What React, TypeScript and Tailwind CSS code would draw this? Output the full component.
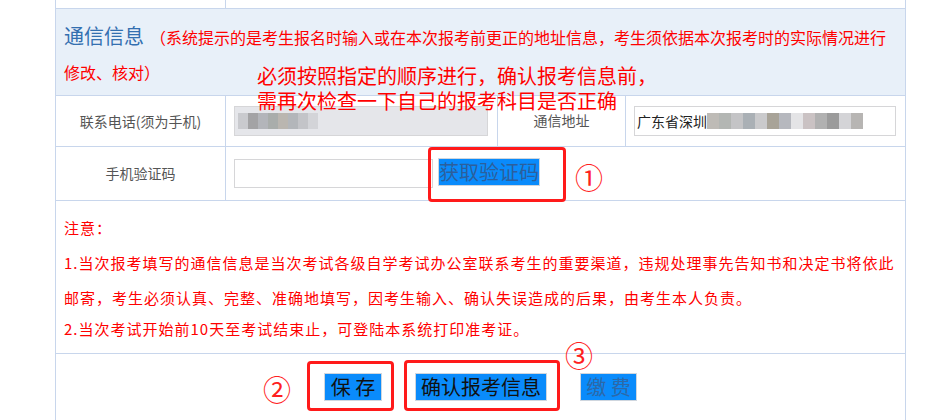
import React from "react";

const phoneBlur = ["#c9cace", "#a3a3a5", "#b3b5ba", "#a9adab", "#bab6b0", "#b3b6ba", "#c3c4c8", "#d3d4d8"];
const addrBlur = [
  "#bebbb6", "#b3b6b3", "#c4c4c6", "#aab0b5", "#cacacc", "#a8a398", "#b6b8be",
  "#e4e4e6", "#cac2c3", "#b1b1b1", "#9b9b9b", "#d4d4d7", "#b7b5b3",
];

const Mosaic = ({ colors, cell }: { colors: string[]; cell: string }) => (
  <div className="flex">
    {colors.map((c, i) => (
      <div key={i} className={cell} style={{ backgroundColor: c }} />
    ))}
  </div>
);

const App = () => {
  return (
    <div className="relative w-[947px] h-[420px] overflow-hidden bg-white font-['Noto_Sans_CJK_SC',sans-serif]">
      <div className="ml-[55px] w-[851px] h-full border-l border-r border-[#c8d6ec]">
        {/* previous row (cut off) */}
        <div className="grid grid-cols-[170px_1fr] h-[9px] border-b border-[#c8d6ec]">
          <div className="border-r border-[#c8d6ec]" />
          <div />
        </div>

        {/* header */}
        <div className="h-[87px] bg-[#e8f0f9] border-b border-[#c8d6ec] px-[8px] pt-[9px] leading-[35px]">
          <span className="text-[20px] text-[#336fb0]">通信信息</span>
          <span className="ml-[6px] text-[16px] text-[#ff0000]">
            （系统提示的是考生报名时输入或在本次报考前更正的地址信息，考生须依据本次报考时的实际情况进行修改、核对）
          </span>
        </div>

        {/* phone / address */}
        <div className="grid grid-cols-[170px_272px_128px_1fr] h-[51px] border-b border-[#c8d6ec] text-[14px] text-[#555]">
          <div className="flex items-center justify-center border-r border-[#c8d6ec]">联系电话(须为手机)</div>
          <div className="flex items-center pl-[8px] border-r border-[#c8d6ec]">
            <div className="flex items-center w-[254px] h-[30px] bg-[#e5e6ea] border border-[#d6d6d8] pl-[3px]">
              <Mosaic colors={phoneBlur} cell="w-[10px] h-[16px]" />
            </div>
          </div>
          <div className="flex items-center justify-center border-r border-[#c8d6ec] pb-[2px]">通信地址</div>
          <div className="flex items-center pl-[8px]">
            <div className="flex items-center w-[262px] h-[30px] bg-white border border-[#d6d6d8] pl-[2px] text-[#222]">
              <span>广东省深圳</span>
              <Mosaic colors={addrBlur} cell="w-[12px] h-[16px]" />
            </div>
          </div>
        </div>

        {/* verification code */}
        <div className="grid grid-cols-[170px_1fr] h-[54px] border-b border-[#c8d6ec]">
          <div className="flex items-center justify-center border-r border-[#c8d6ec] text-[14px] text-[#555]">手机验证码</div>
          <div className="flex items-center pl-[8px]">
            <div className="w-[199px] h-[29px] border border-[#d6d6d8] bg-white" />
            <div className="relative ml-[5px] -mt-[3px]">
              <button className="w-[102px] h-[28px] px-0 whitespace-nowrap bg-[#0a8bfb] border border-[#cfd6de] text-[20px] leading-[26px] text-[#2c5f9c]">
                获取验证码
              </button>
              <div className="absolute -left-[10px] -top-[11px] w-[138px] h-[55px] border-[3px] border-[#ff1a1a] rounded-[4px]" />
            </div>
            <span className="ml-[35px] mt-[6px] text-[28px] leading-none text-[#ff2020]">①</span>
          </div>
        </div>

        {/* notes */}
        <div className="h-[153px] border-b border-[#c8d6ec] px-[8px] pt-[9px] text-[15px] tracking-[1px] text-[#ff0000]">
          <div className="leading-[35px]">注意：</div>
          <div className="leading-[35px]">
            1.当次报考填写的通信信息是当次考试各级自学考试办公室联系考生的重要渠道，违规处理事先告知书和决定书将依此邮寄，考生必须认真、完整、准确地填写，因考生输入、确认失误造成的后果，由考生本人负责。
          </div>
          <div className="leading-[27px]">2.当次考试开始前10天至考试结束止，可登陆本系统打印准考证。</div>
        </div>

        {/* actions */}
        <div className="flex justify-center gap-[33px] pt-[19px] text-[20px] leading-[26px]">
          <div className="relative">
            <button className="w-[58px] h-[28px] px-0 whitespace-nowrap bg-[#0a8bfb] border border-[#cfd6de] text-[#111]">保 存</button>
            <div className="absolute -left-[17px] -top-[12px] w-[87px] h-[50px] border-[3px] border-[#ff1a1a] rounded-[4px]" />
            <span className="absolute -left-[61px] top-[2px] text-[28px] leading-none text-[#ff2020]">②</span>
          </div>
          <div className="relative">
            <button className="w-[132px] h-[28px] px-0 whitespace-nowrap bg-[#0a8bfb] border border-[#cfd6de] text-[#111]">确认报考信息</button>
            <div className="absolute -left-[11px] -top-[13px] w-[156px] h-[51px] border-[3px] border-[#ff1a1a] rounded-[4px]" />
          </div>
          <div className="relative">
            <button className="w-[57px] h-[28px] px-0 whitespace-nowrap bg-[#0a8bfb] border border-[#cfd6de] text-[#2d68a8]">缴 费</button>
            <span className="absolute -left-[15px] -top-[32px] text-[28px] leading-none text-[#ff2020]">③</span>
          </div>
        </div>
      </div>

      {/* annotation */}
      <div className="absolute left-[257px] top-[63px] text-[20px] leading-[25px] text-[#ff0000] whitespace-nowrap">
        <div>必须按照指定的顺序进行，确认报考信息前，</div>
        <div>需再次检查一下自己的报考科目是否正确</div>
      </div>
    </div>
  );
};

export default App;
